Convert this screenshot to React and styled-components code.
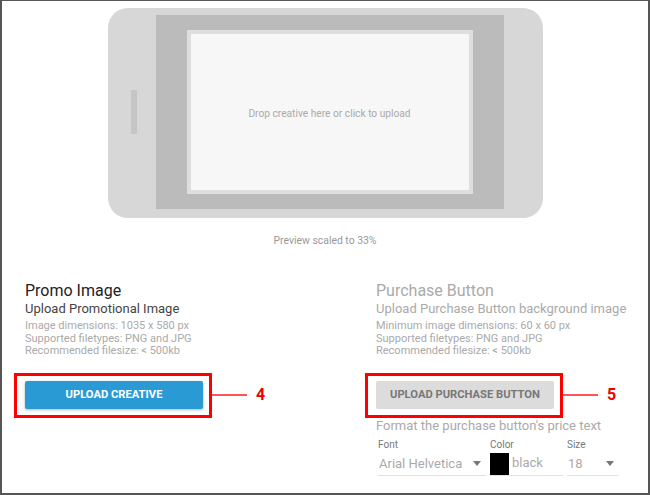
import styled, { createGlobalStyle } from "styled-components";

const GlobalStyle = createGlobalStyle`
  html, body {
    margin: 0;
    padding: 0;
    background: #fff;
  }
  * {
    box-sizing: border-box;
  }
`;

const App = () => {
    return (
        <Page>
            <GlobalStyle />
            <Phone>
                <SideButton />
                <Screen>
                    <DropZone>Drop creative here or click to upload</DropZone>
                </Screen>
            </Phone>
            <Caption>Preview scaled to 33%</Caption>

            <Columns>
                <Column>
                    <Title>Promo Image</Title>
                    <Subtitle>Upload Promotional Image</Subtitle>
                    <Details>
                        Image dimensions: 1035 x 580 px<br />
                        Supported filetypes: PNG and JPG<br />
                        Recommended filesize: &lt; 500kb
                    </Details>
                    <ButtonRow>
                        <Callout>
                            <Outline />
                            <Button primary>Upload Creative</Button>
                        </Callout>
                        <Connector />
                        <Marker>4</Marker>
                    </ButtonRow>
                </Column>

                <Column>
                    <Title muted>Purchase Button</Title>
                    <Subtitle muted>Upload Purchase Button background image</Subtitle>
                    <Details>
                        Minimum image dimensions: 60 x 60 px<br />
                        Supported filetypes: PNG and JPG<br />
                        Recommended filesize: &lt; 500kb
                    </Details>
                    <ButtonRow>
                        <Callout>
                            <Outline />
                            <Button>Upload Purchase Button</Button>
                        </Callout>
                        <Connector />
                        <Marker>5</Marker>
                    </ButtonRow>
                    <Subtitle muted>Format the purchase button's price text</Subtitle>

                    <Fields>
                        <Field width="108px">
                            <FieldLabel>Font</FieldLabel>
                            <Select>
                                <span>Arial Helvetica</span>
                                <Caret />
                            </Select>
                        </Field>
                        <Field width="73px">
                            <FieldLabel>Color</FieldLabel>
                            <ColorInput>
                                <Swatch color="#000" />
                                <ColorText>black</ColorText>
                            </ColorInput>
                        </Field>
                        <Field width="52px">
                            <FieldLabel>Size</FieldLabel>
                            <Select>
                                <span>18</span>
                                <Caret />
                            </Select>
                        </Field>
                    </Fields>
                </Column>
            </Columns>
        </Page>
    );
};

export default App;

const Page = styled.div`
  width: 650px;
  height: 495px;
  border: 2px solid #555;
  border-top-width: 1px;
  padding-top: 7px;
  font-family: Roboto, "Liberation Sans", sans-serif;
  overflow: hidden;
`;

const Phone = styled.div`
  width: 435px;
  height: 210px;
  margin: 0 auto;
  background: #d7d7d7;
  border-radius: 20px;
  display: flex;
  align-items: stretch;
  padding: 7px 39px 9px 23px;
`;

const SideButton = styled.div`
  width: 6px;
  height: 44px;
  align-self: center;
  margin-right: 19px;
  background: #c5c5c5;
`;

const Screen = styled.div`
  flex: 1;
  background: #bbbbbb;
  display: flex;
  align-items: center;
  justify-content: center;
`;

const DropZone = styled.div`
  width: 286px;
  height: 164px;
  border: 4px solid #dedede;
  background: #f7f7f7;
  display: flex;
  align-items: center;
  justify-content: center;
  padding-top: 2px;
  font-size: 10.2px;
  color: #aaa;
`;

const Caption = styled.div`
  margin-top: 16px;
  text-align: center;
  font-size: 10.4px;
  line-height: 13px;
  color: #999;
`;

const Columns = styled.div`
  display: grid;
  grid-template-columns: 351px 1fr;
  padding-left: 23px;
  margin-top: 34px;
`;

const Column = styled.div`
  display: flex;
  flex-direction: column;
  align-items: flex-start;
`;

const Title = styled.div`
  font-size: 16px;
  line-height: 20px;
  color: ${(p) => (p.muted ? "#aaa" : "#222")};
`;

const Subtitle = styled.div`
  font-size: 13px;
  line-height: 16px;
  color: ${(p) => (p.muted ? "#aaa" : "#444")};
`;

const Details = styled.div`
  margin-top: 3px;
  font-size: 11px;
  line-height: 12.5px;
  color: #aaa;
`;

const ButtonRow = styled.div`
  display: flex;
  align-items: center;
  margin-top: 23px;
  margin-bottom: 9px;
`;

const Callout = styled.div`
  position: relative;
`;

const Outline = styled.div`
  position: absolute;
  top: -8px;
  left: -11px;
  right: -9px;
  bottom: -9px;
  border: 3px solid #f00;
  pointer-events: none;
`;

const Button = styled.button`
  width: 178px;
  height: 28px;
  border: none;
  border-radius: 2px;
  font-family: Roboto, "Liberation Sans", sans-serif;
  font-size: 11.2px;
  font-weight: 700;
  text-transform: uppercase;
  background: ${(p) => (p.primary ? "#2a9ad5" : "#dcdcdc")};
  color: ${(p) => (p.primary ? "#fff" : "#777")};
  box-shadow: ${(p) => (p.primary ? "0 1px 3px rgba(0,0,0,0.3)" : "none")};
  cursor: pointer;
`;

const Connector = styled.div`
  width: 35px;
  height: 2px;
  margin-left: 9px;
  background: #f55;
`;

const Marker = styled.div`
  margin-left: 9px;
  font-size: 16px;
  font-weight: 700;
  color: #e00;
`;

const Fields = styled.div`
  display: flex;
  gap: 4px;
  margin-top: 5px;
  padding-left: 2px;
`;

const Field = styled.div`
  width: ${(p) => p.width};
  display: flex;
  flex-direction: column;
`;

const FieldLabel = styled.div`
  font-size: 10px;
  line-height: 12px;
  color: #777;
`;

const Select = styled.div`
  margin-top: 2px;
  height: 23px;
  display: flex;
  align-items: center;
  justify-content: space-between;
  padding: 0 5px 0 1px;
  border-bottom: 1px solid #e3e3e3;
  font-size: 13px;
  color: #aaa;
`;

const Caret = styled.span`
  width: 0;
  height: 0;
  border-left: 4.5px solid transparent;
  border-right: 4.5px solid transparent;
  border-top: 5px solid #777;
`;

const ColorInput = styled.div`
  margin-top: 2px;
  height: 23px;
  display: flex;
  align-items: stretch;
  border-bottom: 1px solid #e3e3e3;
`;

const Swatch = styled.div`
  width: 19px;
  height: 22px;
  background: ${(p) => p.color};
`;

const ColorText = styled.span`
  margin-left: 3px;
  font-size: 13px;
  line-height: 20px;
  color: #aaa;
`;
